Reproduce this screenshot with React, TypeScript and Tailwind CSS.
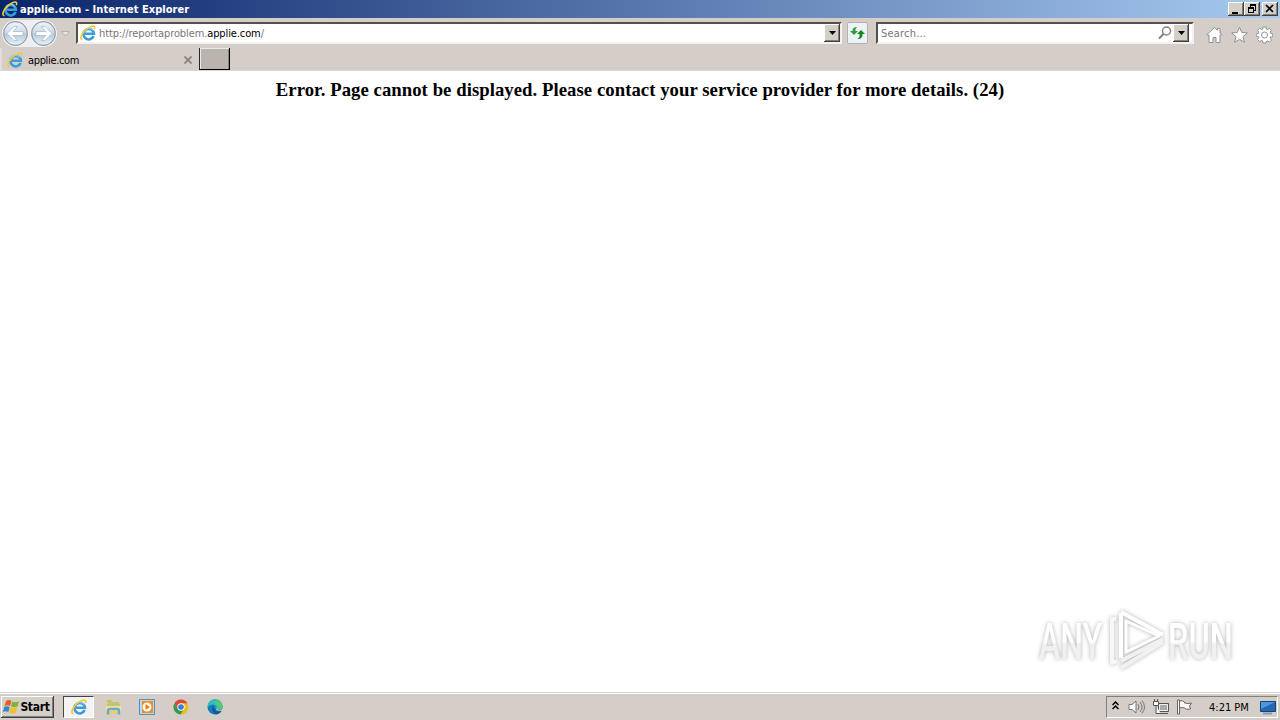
import type { ReactNode } from 'react';

const IeIcon = () => (
  <svg width="16" height="16" viewBox="0 0 16 16" className="shrink-0">
    <path
      d="M13.600 11A5.200 5.200 0 1 1 13.900 8.800H5"
      fill="none"
      stroke="#3a9ddb"
      strokeWidth="2.600"
    />
    <path
      d="M13 5.500A5.200 5.200 0 0 0 4 6.500"
      fill="none"
      stroke="#79cdf2"
      strokeWidth="1.200"
    />
    <path
      d="M2.500 14.800C-.6 14.500 1 9.500 5.200 5.400C9 1.700 13.600 0 14.500 1.600C15 2.600 14.600 3.500 14.200 4.200"
      fill="none"
      stroke="#efc93c"
      strokeWidth="1.600"
    />
  </svg>
);

const RoundArrow = ({ flip = false }: { flip?: boolean }) => (
  <svg width="27" height="27" viewBox="0 0 27 27" className="shrink-0">
    <defs>
      <linearGradient id="orb" x1="0" y1="0" x2="0" y2="1">
        <stop offset="0" stopColor="#f0f5fa" />
        <stop offset=".48" stopColor="#cbd9e7" />
        <stop offset=".52" stopColor="#b5c8db" />
        <stop offset="1" stopColor="#e7f4fc" />
      </linearGradient>
    </defs>
    <circle cx="13.500" cy="13.500" r="13" fill="#f7f8fa" />
    <circle cx="13.500" cy="13.500" r="11.800" fill="url(#orb)" stroke="#939ba5" strokeWidth="1.200" />
    <path
      d="M5 13.500L12 6.500h3.500l-4.500 5h10v4H11l4.500 5H12Z"
      fill="#fff"
      stroke="#a5b4c4"
      strokeWidth=".7"
      transform={flip ? 'translate(27 0) scale(-1 1)' : undefined}
    />
  </svg>
);

const Bevel = ({ className = '', children }: { className?: string; children?: ReactNode }) => (
  <div
    className={`flex shrink-0 items-center justify-center bg-[#d4d0c8] shadow-[inset_-1px_-1px_0_#404040,inset_1px_1px_0_#fff,inset_-2px_-2px_0_#808080] ${className}`}
  >
    {children}
  </div>
);

const DownArrow = () => (
  <svg width="7" height="4" viewBox="0 0 7 4">
    <path d="M0 0h7L3.500 4Z" fill="#000" />
  </svg>
);

const TitleBar = () => (
  <div className="flex h-[18px] items-center bg-[linear-gradient(90deg,#0a246a,#a6caf0)] pl-[2px] pr-[2px]">
    <IeIcon />
    <span className="ml-[2px] whitespace-nowrap pt-px font-['DejaVu_Sans_Condensed','DejaVu_Sans',sans-serif] text-[11px] font-bold leading-[17px] tracking-[0.04px] text-white">
      applie.com - Internet Explorer
    </span>
    <div className="ml-auto flex">
      <Bevel className="h-[14px] w-4">
        <svg width="16" height="14"><path d="M4 10h6v2H4z" /></svg>
      </Bevel>
      <Bevel className="h-[14px] w-4">
        <svg width="16" height="14" fill="none" stroke="#000" shapeRendering="crispEdges">
          <path d="M6.500 6V3.500h5v5H10M6 2.500h6M4.500 6.500h5v4h-5zM4 5.500h6" />
        </svg>
      </Bevel>
      <Bevel className="ml-[2px] h-[14px] w-4">
        <svg width="16" height="14"><path d="M4 3l7 7M11 3l-7 7" stroke="#000" strokeWidth="1.700" /></svg>
      </Bevel>
    </div>
  </div>
);

const Toolbar = () => (
  <div className="flex h-[30px] items-start pl-[2px]">
    <div className="mt-[2px] flex gap-px rounded-full bg-[#eeeff0]">
      <RoundArrow />
      <RoundArrow flip />
    </div>
    <svg width="9" height="6" className="ml-1 mt-[13px] shrink-0">
      <path d="M.5.5h8L4.500 5Z" fill="#e8e4e0" stroke="#b5afaa" />
    </svg>
    <div className="ml-[6px] mt-1 flex h-[22px] w-[766px] shrink-0 items-center border-2 border-b-[#f3f0ed] border-l-[#55504e] border-r-[#f3f0ed] border-t-[#55504e] bg-white">
      <span className="ml-[2px] flex"><IeIcon /></span>
      <span className="ml-[3px] whitespace-nowrap pt-[3px] text-[11px] tracking-[-0.11px] text-[#777]">
        http://reportaproblem.<span className="text-black">applie.com</span>/
      </span>
      <Bevel className="ml-auto h-[18px] w-4"><DownArrow /></Bevel>
    </div>
    <div className="ml-[5px] mt-1 flex h-[22px] w-[21px] shrink-0 items-center justify-center rounded-[2px] border border-[#b3b0af] bg-[#edf2f7]">
      <svg width="15" height="14" viewBox="0 0 15 14">
        <path d="M0 5h2.500C2.500 2 4 1 7 1L5.500 3V5H8L4 9Z" fill="#309d36" />
        <path d="M15 8h-2.500c0 4-1.500 5-5 5l2-2V8H7l4-4Z" fill="#168621" />
      </svg>
    </div>
    <div className="ml-[8px] mt-1 flex h-[22px] w-[318px] shrink-0 items-center border-2 border-b-[#f3f0ed] border-l-[#55504e] border-r-[#f3f0ed] border-t-[#55504e] bg-white">
      <span className="ml-[3px] pt-[3px] text-[11px] tracking-[0.2px] text-[#747474]">Search...</span>
      <svg width="14" height="14" viewBox="0 0 14 14" className="ml-auto" fill="none" stroke="#828282">
        <circle cx="8.500" cy="5" r="4" strokeWidth="1.500" />
        <path d="M5.500 8L1 12.500" strokeWidth="2" />
      </svg>
      <Bevel className="ml-px mr-[3px] h-[18px] w-4"><DownArrow /></Bevel>
    </div>
    <div className="ml-[12px] mt-[8px] flex gap-2">
      <svg width="17" height="18" viewBox="0 0 17 18" fill="#fff" stroke="#929292">
        <path d="M1 8.500L8.500 1.500l3 2.800V2.500h2.500V7l2 1.700-1 1-1-.9v7.700h-4v-5H7v5H3V8.800l-1 .9Z" />
      </svg>
      <svg width="17" height="18" viewBox="0 0 17 18" fill="#fff" stroke="#929292">
        <path d="M8.500 1.200l2.200 5.200 5.600.5-4.200 3.700 1.300 5.700-4.900-3-4.900 3 1.300-5.700L.7 6.900l5.600-.5Z" />
      </svg>
      <svg width="17" height="18" viewBox="0 0 17 18" fill="#fff" stroke="#929292">
        <path d="M7 1h3l.4 2.200 1.100.4 1.900-1.300 2 2-1.200 1.900.4 1.200 2.200.4v2.800l-2.200.4-.4 1.200 1.200 1.900-2 2-1.900-1.200-1.200.5L10 17H7l-.4-2.100-1.100-.5-1.900 1.200-2-2 1.200-1.900-.4-1.200-2.200-.4V7.800l2.200-.4.4-1.200-1.200-1.900 2-2 1.900 1.300 1.100-.4Z" />
        <circle cx="8.500" cy="9" r="3" />
      </svg>
    </div>
  </div>
);

const TabRow = () => (
  <div className="flex h-[23px] border-b border-[#ddd8d4]">
    <div className="flex h-[22px] w-[197px] items-center border-l-2 border-[#e2ddda] pl-[5px] pt-[2px]">
      <IeIcon />
      <span className="ml-[5px] pt-[2px] text-[11px] tracking-[-0.34px]">applie.com</span>
      <svg width="8" height="8" viewBox="0 0 8 8" className="ml-auto mr-[5px]">
        <path d="M.5.5l7 7M7.500.5l-7 7" stroke="#858180" strokeWidth="1.700" />
      </svg>
    </div>
    <div className="ml-[2px] h-[22px] w-[31px] border-b border-l border-r border-b-black border-l-[#292626] border-r-black bg-[#bbb3ae] shadow-[inset_1px_1px_0_#eee9e6,inset_-1px_0_0_#8e8581]" />
  </div>
);

const Watermark = () => (
  <svg
    width="216"
    height="80"
    viewBox="0 0 216 80"
    className="absolute bottom-[11px] right-[35px] overflow-visible drop-shadow-[0_0_2px_rgba(0,0,0,0.3)]"
  >
    <defs>
      <linearGradient id="mark" x1="0" y1="0" x2="0" y2="1">
        <stop offset=".5" stopColor="#fff" />
        <stop offset=".54" stopColor="#f0f0f0" />
      </linearGradient>
    </defs>
    <g fill="url(#mark)" fontFamily="Roboto, sans-serif" fontSize="50" fontWeight="500">
      <text transform="translate(10 58) scale(.64 1)">ANY</text>
      <text transform="translate(139 58) scale(.65 1)">RUN</text>
    </g>
    <g fill="none" strokeLinejoin="round" strokeWidth="4">
      <path d="M87 18h-4v44l5-2" stroke="#f7f7f7" />
      <path d="M92 12v45M92 11l42 23" stroke="#fff" />
      <path d="M97 20v31l33-16Z" stroke="#fff" strokeWidth="3" />
      <path d="M92 60l42-22M92 67l42-26" stroke="#f1f1f1" />
    </g>
  </svg>
);

const Taskbar = () => (
  <div className="flex h-[28px] items-start border-t border-[#d4d0c8] bg-[#d5cdc8] shadow-[inset_0_1px_0_#fff]">
    <Bevel className="ml-px mt-[3px] h-[22px] w-[53px]">
      <svg width="17" height="16" viewBox="0 0 17 16" className="shrink-0">
        <path d="M3 2Q6 0 8.500 2L7 7Q4.500 5.500 1.500 7Z" fill="#ef5a25" />
        <path d="M9.500 2.500Q12 4 16 2.200L14.500 7.500Q11 9 8 7.500Z" fill="#79b733" />
        <path d="M1.200 8Q4 6.500 6.700 8L5.300 13Q3 11.500 0 13Z" fill="#3283d0" />
        <path d="M7.600 8.500Q11 10 14.200 8.500L12.700 13.700Q9 15 6.200 13.500Z" fill="#f7bd26" />
      </svg>
      <span className="mr-[2px] font-['DejaVu_Sans_Condensed','DejaVu_Sans',sans-serif] text-[12px] font-bold leading-[18px] tracking-[-0.3px]">Start</span>
    </Bevel>
    <div className="ml-[9px] mt-[3px] flex h-[22px] w-[31px] items-center justify-center border border-b-white border-l-[#444] border-r-white border-t-[#444] bg-[#f5f3f1]">
      <IeIcon />
    </div>
    <svg width="17" height="16" viewBox="0 0 17 16" className="ml-[11px] mt-[6px]">
      <path d="M1 1h6l1 2h7v12H1z" fill="#ecca70" />
      <path d="M2 2h5M3 4h11M2 6h13" stroke="#91bd83" strokeWidth="1.200" />
      <path d="M1 7h15v5H1z" fill="#f7df91" />
      <path d="M3 15.500v-3.500q0-2 2-2h7q2 0 2 2v3.500" fill="none" stroke="#62acd7" strokeWidth="2.400" />
    </svg>
    <svg width="16" height="16" viewBox="0 0 16 16" className="ml-[17px] mt-[6px]">
      <path d="M.5.5h15v15H.5z" fill="#b8d9ef" stroke="#528fb9" />
      <path d="M3 2h11v12H3z" fill="#f28b18" />
      <circle cx="8" cy="8" r="4.500" fill="#fff" />
      <path d="M6.500 5v6L11 8Z" fill="#ed7c12" />
    </svg>
    <svg width="16" height="16" viewBox="0 0 16 16" className="ml-[18px] mt-[6px]">
      <circle cx="8" cy="8" r="7.500" fill="#e9bd24" />
      <path d="M1.500 4.200A7.500 7.500 0 0 1 14.500 4.300H8L5 10Z" fill="#dd4638" />
      <path d="M1.500 4.200A7.500 7.500 0 0 0 7.500 15.500L11 9.700 5 10Z" fill="#319b51" />
      <circle cx="8" cy="8" r="3.700" fill="#fff" />
      <circle cx="8" cy="8" r="2.800" fill="#3e79d5" />
    </svg>
    <svg width="17" height="16" viewBox="0 0 17 16" className="ml-[18px] mt-[6px]">
      <circle cx="8" cy="8" r="7.500" fill="#147dbb" />
      <path d="M.6 8A7.500 7.500 0 0 1 15.700 7.200Q16 11 12 11H9Q11 9 9 7Q5 3.500.6 8Z" fill="#32b9c4" />
      <path d="M9 1Q16 3 15.700 8Q15 11 11 11L9.500 10Q12 7 7 4Z" fill="#52c979" />
      <path d="M5.500 7Q4 13 9 15.400Q13 15 14.600 12Q9 14 7.500 10Z" fill="#17539e" />
      <path d="M8 7.500Q10.500 8 9 10.500Q11 12.500 15 11.500L16 14H17V9Q14 12 10.500 10.800Z" fill="#d5cdc8" />
    </svg>
    <div className="ml-auto mr-[2px] mt-[3px] flex h-[22px] w-[172px] items-center border border-b-white border-l-[#85807c] border-r-white border-t-[#85807c]">
      <svg width="7" height="9" className="-mt-[3px] ml-[5px]" fill="none" stroke="#000" strokeWidth="1.500">
        <path d="M.5 4l3-3 3 3M.5 8l3-3 3 3" />
      </svg>
      <svg width="17" height="16" viewBox="0 0 17 16" className="ml-[9px]" fill="none" stroke="#777">
        <path d="M1 5.500h3L8 2v12l-4-3.500H1Z" fill="#fafafa" />
        <path d="M10 5q2 3 0 6M12 3q4 5 0 10M14 1.500q5 6.500 0 13" />
      </svg>
      <svg width="17" height="17" viewBox="0 0 17 17" className="ml-[8px]" stroke="#555">
        <path d="M5.500 4.500h10v8h-10zM8 14.500h7" fill="#aaa" />
        <path d="M6.500 5.500h8v6h-8z" fill="#aaa" stroke="#eee" />
        <path d="M.5 2.500h5v4h-5zM3 7v7.500h5M1.500 0v2M4.500 0v2" fill="#f7f7f7" />
      </svg>
      <svg width="17" height="16" viewBox="0 0 17 16" className="ml-[6px]" fill="#fafafa" stroke="#666">
        <path d="M1.500 1h2v14h-2zM3.500 2q3-1 5 1v1q3 1 7 0l-2 3 1 3q-5 1-6-1-2-1-5 0Z" />
      </svg>
      <span className="ml-[16px] whitespace-nowrap pt-[2px] text-[11px] tracking-[0px]">4:21 PM</span>
      <svg width="16" height="15" viewBox="0 0 16 15" className="ml-auto mr-px">
        <path d="M.5 1.500h15v10H.5z" fill="#2468b5" stroke="#164377" />
        <path d="M1 2h14L1 9z" fill="#4b99dc" />
        <path d="M3 13.500h9" stroke="#7d9bb7" strokeWidth="2" />
      </svg>
    </div>
  </div>
);

const App = () => (
  <div className="flex h-[720px] w-[1280px] flex-col overflow-hidden bg-white font-['DejaVu_Sans_Condensed','DejaVu_Sans',sans-serif] text-black">
    <TitleBar />
    <div className="h-[53px] bg-[#d5cdc8]">
      <Toolbar />
      <TabRow />
    </div>
    <main className="relative flex-1 bg-white pt-[8px]">
      <h3 className="text-center font-['Liberation_Serif',serif] text-[18.72px] font-bold leading-[22px] tracking-[0.055px]">
        Error. Page cannot be displayed. Please contact your service provider for more details. (24)
      </h3>
      <Watermark />
    </main>
    <Taskbar />
  </div>
);

export default App;
